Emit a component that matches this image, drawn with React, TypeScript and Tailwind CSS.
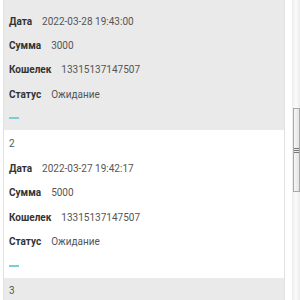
import type { ReactNode } from 'react';

interface Payment {
  id: number;
  date: string;
  amount: string;
  wallet: string;
  status: string;
}

const payments: Payment[] = [
  { id: 1, date: '2022-03-28 19:43:00', amount: '3000', wallet: '13315137147507', status: 'Ожидание' },
  { id: 2, date: '2022-03-27 19:42:17', amount: '5000', wallet: '13315137147507', status: 'Ожидание' },
  { id: 3, date: '2022-03-26 18:10:05', amount: '2000', wallet: '13315137147507', status: 'Ожидание' },
];

function Field({ label, children }: { label: string; children: ReactNode }) {
  return (
    <div className="h-[24.3px] flex items-center gap-[10px]">
      <span className="font-bold text-[#333]">{label}</span>
      <span className="text-[#555]">{children}</span>
    </div>
  );
}

function PaymentRow({ p, odd }: { p: Payment; odd: boolean }) {
  return (
    <div className={odd ? 'bg-[#eaeaea] pl-[5px]' : 'bg-white pl-[5px]'}>
      <div className="h-[26px] flex items-center text-[#555]">{p.id}</div>
      <Field label="Дата">{p.date}</Field>
      <Field label="Сумма">{p.amount}</Field>
      <Field label="Кошелек">{p.wallet}</Field>
      <Field label="Статус">{p.status}</Field>
      <div className="h-[24.3px] flex items-center">
        <span className="block w-[10px] h-[2px] bg-[#7dcdd8]" />
      </div>
    </div>
  );
}

function Scrollbar() {
  return (
    <div className="w-[8px] h-full bg-gradient-to-r from-[#ececec] via-[#fbfbfb] to-[#ececec] flex flex-col">
      <div className="h-[108px]" />
      <div className="h-[84px] ml-[1px] border border-[#a9a9a9] bg-gradient-to-r from-[#f6f6f6] to-[#e4e4e4] flex flex-col items-center justify-center gap-[1px]">
        <span className="block w-[5px] h-px bg-[#777]" />
        <span className="block w-[5px] h-px bg-[#777]" />
        <span className="block w-[5px] h-px bg-[#777]" />
      </div>
    </div>
  );
}

export default function App() {
  return (
    <div className="w-[300px] h-[300px] overflow-hidden bg-white flex" style={{ fontFamily: 'Roboto, "Noto Sans", sans-serif' }}>
      <div className="ml-[3px] w-[282px] h-full overflow-hidden border-x border-[#e2e2e2] text-[10px]">
        <div className="-mt-[17px]">
          {payments.map((p, i) => (
            <PaymentRow key={p.id} p={p} odd={i % 2 === 0} />
          ))}
        </div>
      </div>
      <div className="ml-[7px] h-full">
        <Scrollbar />
      </div>
    </div>
  );
}
